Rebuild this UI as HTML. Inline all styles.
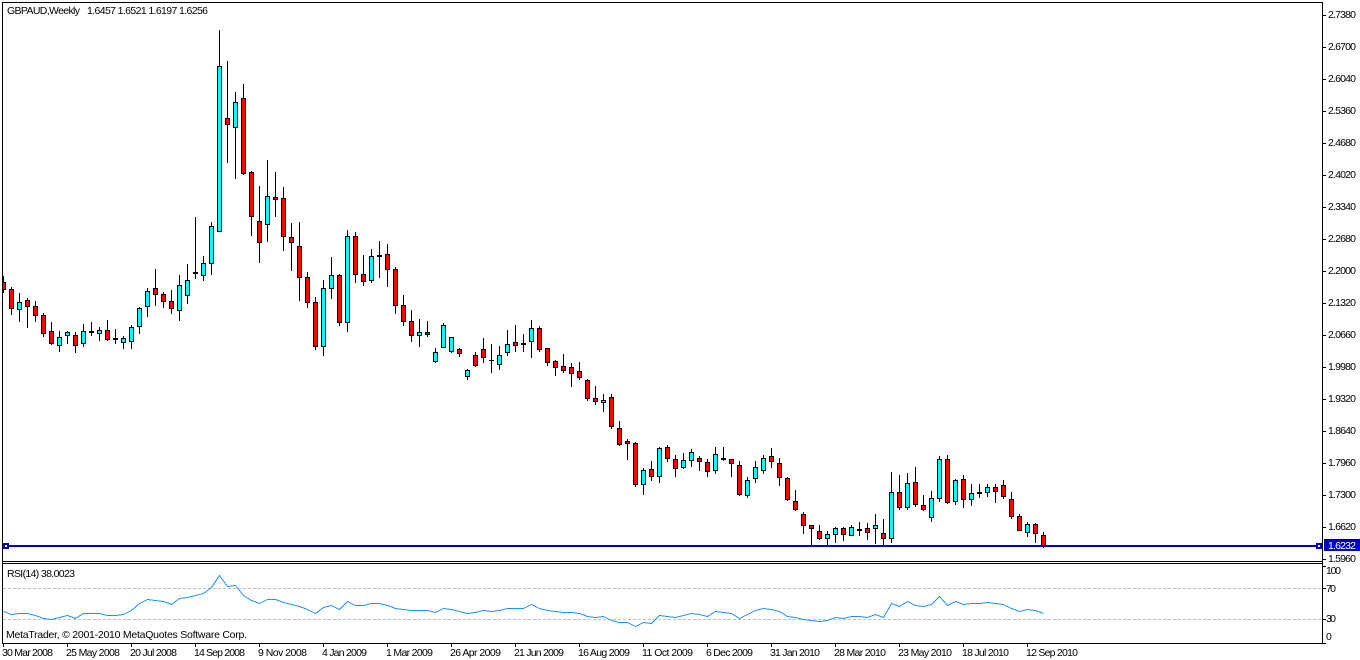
<!DOCTYPE html>
<html><head><meta charset="utf-8"><title>GBPAUD,Weekly</title>
<style>
html,body{margin:0;padding:0;background:#fff;width:1360px;height:660px;overflow:hidden}
svg{display:block}
text{font-family:"Liberation Sans",sans-serif;font-size:10.5px;fill:#000}
</style></head><body>
<svg width="1360" height="660" viewBox="0 0 1360 660" xmlns="http://www.w3.org/2000/svg">
<rect width="1360" height="660" fill="#fff"/>
<g shape-rendering="crispEdges">
<path stroke="#000" stroke-width="1" fill="none" d="M3.5 276V293M11.5 287V315M19.5 293V322M27.5 298V328M35.5 301V322M43.5 313V337M51.5 322V345M59.5 331V352M67.5 331V344M75.5 332V353M83.5 324V347M91.5 322V336M99.5 327V341M107.5 320V341M115.5 329V344M123.5 336V349M131.5 325V349M139.5 307V334M147.5 288V317M155.5 269V306M163.5 292V308M171.5 290V314M179.5 275V321M187.5 264V304M195.5 217V279M203.5 256V281M211.5 222V275M219.5 30V232M227.5 61V163M235.5 92V179M243.5 84V175M251.5 171V236M259.5 186V263M267.5 160V242M275.5 172V217M283.5 187V251M291.5 223V271M299.5 222V301M307.5 272V308M315.5 297V350M323.5 280V356M331.5 257V299M339.5 274V326M347.5 230V332M355.5 232V283M363.5 255V286M371.5 249V283M379.5 241V278M387.5 244V287M395.5 267V314M403.5 295V326M411.5 310V342M419.5 319V347M427.5 321V337M435.5 348V363M443.5 323V348M451.5 337V353M459.5 348V357M467.5 369V380M475.5 352V367M483.5 338V363M491.5 344V373M499.5 346V370M507.5 330V356M515.5 325V352M523.5 334V352M531.5 320V358M539.5 326V352M547.5 348V366M555.5 360V376M563.5 354V373M571.5 363V387M579.5 362V380M587.5 379V401M595.5 386V405M603.5 394V412M611.5 394V429M619.5 421V446M627.5 439V460M635.5 442V487M643.5 468V495M651.5 461V481M659.5 447V483M667.5 445V462M675.5 455V477M683.5 453V469M691.5 449V467M699.5 456V471M707.5 459V477M715.5 447V474M723.5 447V461M731.5 459V477M739.5 461V496M747.5 477V498M755.5 461V483M763.5 455V474M771.5 448V468M779.5 458V486M787.5 477V501M795.5 490V511M803.5 512V534M811.5 525V545M819.5 525V540M827.5 531V545M835.5 527V543M843.5 527V541M851.5 525V536M859.5 522V536M867.5 523V540M875.5 514V544M883.5 519V545M891.5 472V543M899.5 475V510M907.5 473V510M915.5 467V507M923.5 495V511M931.5 491V522M939.5 456V502M947.5 455V504M955.5 479V505M963.5 475V508M971.5 484V506M979.5 484V498M987.5 484V497M995.5 484V503M1003.5 480V499M1011.5 492V519M1019.5 514V531M1027.5 522V537M1035.5 523V543M1043.5 532V548"/>
<path fill="#f00" stroke="#000" stroke-width="1" d="M1.5 282.5h4v7h-4zM9.5 289.5h4v19h-4zM25.5 300.5h4v6h-4zM33.5 306.5h4v9h-4zM41.5 315.5h4v18h-4zM49.5 331.5h4v12h-4zM73.5 335.5h4v10h-4zM105.5 330.5h4v9h-4zM153.5 288.5h4v6h-4zM161.5 294.5h4v7h-4zM169.5 301.5h4v7h-4zM225.5 118.5h4v6h-4zM241.5 98.5h4v75h-4zM249.5 172.5h4v44h-4zM257.5 221.5h4v21h-4zM273.5 197.5h4v2h-4zM281.5 198.5h4v38h-4zM289.5 237.5h4v5h-4zM297.5 246.5h4v31h-4zM305.5 277.5h4v25h-4zM313.5 302.5h4v44h-4zM337.5 275.5h4v47h-4zM353.5 236.5h4v38h-4zM361.5 274.5h4v7h-4zM385.5 254.5h4v15h-4zM393.5 269.5h4v36h-4zM401.5 305.5h4v16h-4zM409.5 321.5h4v14h-4zM425.5 332.5h4v2h-4zM457.5 349.5h4v4h-4zM473.5 355.5h4v10h-4zM481.5 349.5h4v8h-4zM513.5 342.5h4v3h-4zM537.5 328.5h4v21h-4zM545.5 348.5h4v14h-4zM553.5 361.5h4v6h-4zM561.5 366.5h4v4h-4zM569.5 367.5h4v6h-4zM577.5 371.5h4v6h-4zM585.5 380.5h4v18h-4zM593.5 398.5h4v3h-4zM609.5 397.5h4v29h-4zM617.5 428.5h4v16h-4zM625.5 441.5h4v2h-4zM633.5 443.5h4v41h-4zM649.5 469.5h4v7h-4zM665.5 447.5h4v11h-4zM673.5 459.5h4v9h-4zM697.5 458.5h4v3h-4zM705.5 462.5h4v9h-4zM729.5 459.5h4v4h-4zM737.5 465.5h4v29h-4zM769.5 456.5h4v5h-4zM777.5 463.5h4v14h-4zM785.5 478.5h4v21h-4zM793.5 501.5h4v8h-4zM801.5 514.5h4v11h-4zM809.5 525.5h4v3h-4zM817.5 531.5h4v7h-4zM841.5 528.5h4v6h-4zM865.5 528.5h4v4h-4zM881.5 533.5h4v5h-4zM897.5 492.5h4v15h-4zM913.5 482.5h4v22h-4zM921.5 505.5h4v4h-4zM945.5 459.5h4v43h-4zM961.5 479.5h4v20h-4zM993.5 487.5h4v4h-4zM1001.5 485.5h4v11h-4zM1009.5 499.5h4v17h-4zM1017.5 516.5h4v14h-4zM1033.5 524.5h4v9h-4zM1041.5 535.5h4v10h-4z"/>
<path fill="#0ff" stroke="#000" stroke-width="1" d="M17.5 302.5h4v7h-4zM57.5 337.5h4v8h-4zM65.5 332.5h4v3h-4zM81.5 331.5h4v12h-4zM97.5 330.5h4v3h-4zM121.5 338.5h4v4h-4zM129.5 327.5h4v14h-4zM137.5 308.5h4v18h-4zM145.5 291.5h4v15h-4zM177.5 285.5h4v25h-4zM185.5 280.5h4v15h-4zM201.5 263.5h4v12h-4zM209.5 226.5h4v37h-4zM217.5 66.5h4v165h-4zM233.5 102.5h4v25h-4zM265.5 196.5h4v28h-4zM321.5 288.5h4v58h-4zM329.5 275.5h4v13h-4zM345.5 236.5h4v86h-4zM369.5 256.5h4v24h-4zM417.5 332.5h4v3h-4zM433.5 352.5h4v9h-4zM441.5 325.5h4v22h-4zM449.5 337.5h4v14h-4zM465.5 370.5h4v6h-4zM497.5 355.5h4v9h-4zM505.5 344.5h4v8h-4zM529.5 328.5h4v13h-4zM601.5 400.5h4v2h-4zM641.5 470.5h4v14h-4zM657.5 448.5h4v28h-4zM681.5 460.5h4v7h-4zM689.5 452.5h4v8h-4zM713.5 454.5h4v16h-4zM745.5 480.5h4v15h-4zM753.5 467.5h4v11h-4zM761.5 458.5h4v12h-4zM825.5 534.5h4v4h-4zM833.5 528.5h4v6h-4zM849.5 527.5h4v8h-4zM873.5 525.5h4v3h-4zM889.5 492.5h4v46h-4zM905.5 483.5h4v24h-4zM929.5 498.5h4v19h-4zM937.5 459.5h4v39h-4zM953.5 480.5h4v21h-4zM969.5 493.5h4v6h-4zM985.5 487.5h4v5h-4zM1025.5 524.5h4v8h-4z"/>
<path fill="#000" d="M89 331h5v2h-5zM113 338h5v2h-5zM193 272h5v2h-5zM377 255h5v2h-5zM521 343h5v2h-5zM721 458h5v2h-5zM857 529h5v2h-5zM977 492h5v2h-5zM489 360h5v1h-5z"/>
<rect x="0" y="0" width="2" height="660" fill="#fff"/>
<!-- horizontal line -->
<rect x="3" y="545" width="1319" height="2" fill="#0000cc"/>
<rect x="3" y="543" width="6" height="6" fill="#0000cc"/><rect x="5" y="545" width="2" height="2" fill="#fff"/>
<rect x="1316" y="543" width="6" height="6" fill="#0000cc"/><rect x="1318" y="545" width="2" height="2" fill="#fff"/>
<!-- RSI levels -->
<path stroke="#c0c0c0" stroke-width="1" stroke-dasharray="3 2" fill="none" d="M3 588.5H1322M3 619.5H1322"/>
<!-- frame -->
<path stroke="#000" stroke-width="1" fill="none" d="M2.5 2.5H1322.5V643.5H2.5ZM2.5 561.5H1322.5M2.5 563.5H1322.5"/>
<!-- price ticks -->
<path stroke="#000" stroke-width="1" fill="none" d="M1323 15.5h3M1323 47.5h3M1323 79.5h3M1323 111.5h3M1323 143.5h3M1323 175.5h3M1323 207.5h3M1323 239.5h3M1323 271.5h3M1323 303.5h3M1323 335.5h3M1323 367.5h3M1323 399.5h3M1323 431.5h3M1323 463.5h3M1323 495.5h3M1323 527.5h3M1323 559.5h3M1323 566.5h3M1323 588.5h3M1323 619.5h3M1323 643.5h3"/>
<!-- date ticks -->
<path stroke="#000" stroke-width="1" fill="none" d="M3.5 644v3M67.5 644v3M131.5 644v3M195.5 644v3M259.5 644v3M323.5 644v3M387.5 644v3M451.5 644v3M515.5 644v3M579.5 644v3M643.5 644v3M707.5 644v3M771.5 644v3M835.5 644v3M899.5 644v3M963.5 644v3M1027.5 644v3"/>
<!-- price box -->
<rect x="1324" y="539" width="36" height="1" fill="#000"/>
<rect x="1324" y="540" width="36" height="11" fill="#0000cc"/>
<!-- RSI line -->
<polyline fill="none" stroke="#1e90ff" stroke-width="1" points="3.5,611.5 11.5,614.5 19.5,613.5 27.5,613.5 35.5,615.5 43.5,618.5 51.5,619.5 59.5,617.5 67.5,615.5 75.5,618.5 83.5,613.5 91.5,613.5 99.5,613.5 107.5,615.5 115.5,615.5 123.5,614.5 131.5,610.5 139.5,603.5 147.5,599.5 155.5,600.5 163.5,601.5 171.5,604.5 179.5,598.5 187.5,597.5 195.5,595.5 203.5,593.5 211.5,587.5 219.5,575.5 227.5,586.5 235.5,585.5 243.5,595.5 251.5,600.5 259.5,603.5 267.5,599.5 275.5,599.5 283.5,602.5 291.5,604.5 299.5,606.5 307.5,609.5 315.5,613.5 323.5,607.5 331.5,605.5 339.5,609.5 347.5,601.5 355.5,605.5 363.5,605.5 371.5,603.5 379.5,603.5 387.5,605.5 395.5,608.5 403.5,609.5 411.5,610.5 419.5,610.5 427.5,610.5 435.5,612.5 443.5,608.5 451.5,609.5 459.5,611.5 467.5,613.5 475.5,612.5 483.5,610.5 491.5,611.5 499.5,610.5 507.5,608.5 515.5,608.5 523.5,608.5 531.5,604.5 539.5,608.5 547.5,610.5 555.5,611.5 563.5,612.5 571.5,612.5 579.5,613.5 587.5,616.5 595.5,617.5 603.5,616.5 611.5,620.5 619.5,622.5 627.5,622.5 635.5,626.5 643.5,622.5 651.5,623.5 659.5,615.5 667.5,616.5 675.5,617.5 683.5,615.5 691.5,613.5 699.5,614.5 707.5,616.5 715.5,611.5 723.5,612.5 731.5,613.5 739.5,618.5 747.5,614.5 755.5,610.5 763.5,608.5 771.5,609.5 779.5,611.5 787.5,616.5 795.5,617.5 803.5,619.5 811.5,620.5 819.5,621.5 827.5,620.5 835.5,617.5 843.5,618.5 851.5,616.5 859.5,616.5 867.5,617.5 875.5,614.5 883.5,617.5 891.5,603.5 899.5,606.5 907.5,601.5 915.5,605.5 923.5,606.5 931.5,604.5 939.5,596.5 947.5,605.5 955.5,601.5 963.5,604.5 971.5,603.5 979.5,603.5 987.5,602.5 995.5,603.5 1003.5,604.5 1011.5,608.5 1019.5,611.5 1027.5,609.5 1035.5,610.5 1043.5,613.5"/>
</g>
<!-- labels -->
<text x="7" y="14" textLength="73" lengthAdjust="spacing">GBPAUD,Weekly</text>
<text x="87" y="14" textLength="121" lengthAdjust="spacing">1.6457 1.6521 1.6197 1.6256</text>
<text x="7" y="577" textLength="68" lengthAdjust="spacing">RSI(14) 38.0023</text>
<text x="6" y="638" textLength="241" lengthAdjust="spacing">MetaTrader, © 2001-2010 MetaQuotes Software Corp.</text>
<g>
<text x="1328" y="18" textLength="28">2.7380</text>
<text x="1328" y="50" textLength="28">2.6700</text>
<text x="1328" y="82" textLength="28">2.6040</text>
<text x="1328" y="114" textLength="28">2.5360</text>
<text x="1328" y="146" textLength="28">2.4680</text>
<text x="1328" y="178" textLength="28">2.4020</text>
<text x="1328" y="210" textLength="28">2.3340</text>
<text x="1328" y="242" textLength="28">2.2680</text>
<text x="1328" y="274" textLength="28">2.2000</text>
<text x="1328" y="306" textLength="28">2.1320</text>
<text x="1328" y="338" textLength="28">2.0660</text>
<text x="1328" y="370" textLength="28">1.9980</text>
<text x="1328" y="402" textLength="28">1.9320</text>
<text x="1328" y="434" textLength="28">1.8640</text>
<text x="1328" y="466" textLength="28">1.7960</text>
<text x="1328" y="498" textLength="28">1.7300</text>
<text x="1328" y="530" textLength="28">1.6620</text>
<text x="1328" y="549" textLength="28" style="fill:#fff">1.6232</text>
<text x="1328" y="562" textLength="28">1.5960</text>
<text x="1326" y="574" textLength="15">100</text>
<text x="1326" y="592" textLength="10">70</text>
<text x="1326" y="622" textLength="10">30</text>
<text x="1326" y="640" textLength="5">0</text>
</g>
<g>
<text x="2" y="656" textLength="51">30 Mar 2008</text>
<text x="66" y="656" textLength="54">25 May 2008</text>
<text x="130" y="656" textLength="47">20 Jul 2008</text>
<text x="194" y="656" textLength="51">14 Sep 2008</text>
<text x="258" y="656" textLength="49">9 Nov 2008</text>
<text x="322" y="656" textLength="45">4 Jan 2009</text>
<text x="386" y="656" textLength="47">1 Mar 2009</text>
<text x="450" y="656" textLength="51">26 Apr 2009</text>
<text x="514" y="656" textLength="50">21 Jun 2009</text>
<text x="578" y="656" textLength="52">16 Aug 2009</text>
<text x="642" y="656" textLength="51">11 Oct 2009</text>
<text x="706" y="656" textLength="47">6 Dec 2009</text>
<text x="770" y="656" textLength="50">31 Jan 2010</text>
<text x="834" y="656" textLength="52">28 Mar 2010</text>
<text x="898" y="656" textLength="54">23 May 2010</text>
<text x="962" y="656" textLength="47">18 Jul 2010</text>
<text x="1026" y="656" textLength="52">12 Sep 2010</text>
</g>
</svg>
</body></html>
